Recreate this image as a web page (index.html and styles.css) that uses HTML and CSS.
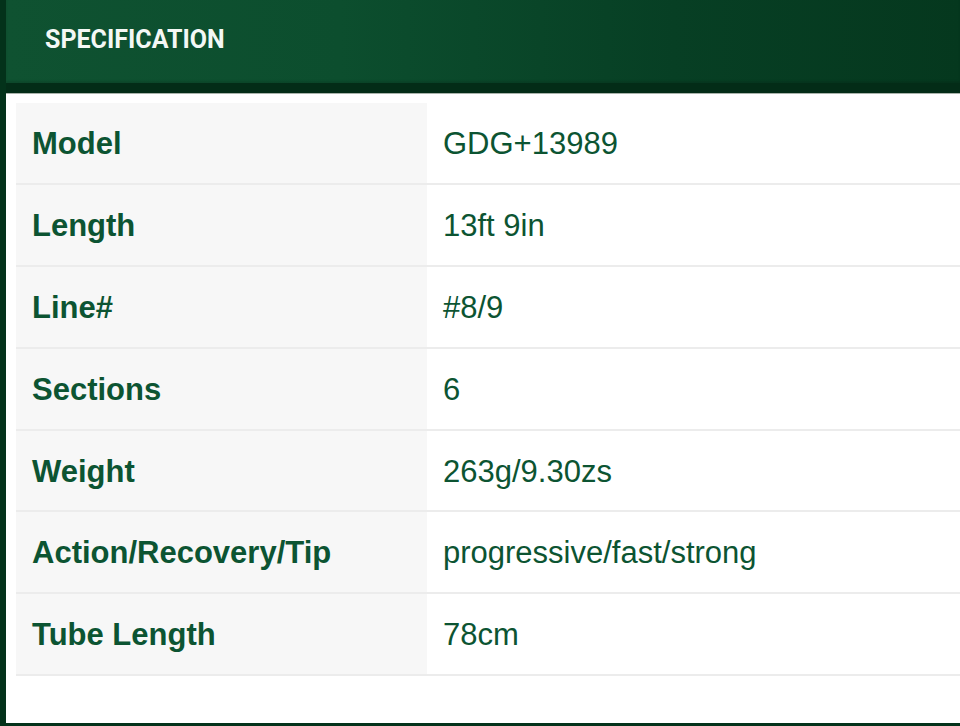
FILE: index.html
```html
<!DOCTYPE html>
<html>
<head>
<meta charset="utf-8">
<link rel="stylesheet" href="styles.css">
</head>
<body>
<div class="frame">
  <div class="header"><h2 class="title">SPECIFICATION</h2></div>
  <div class="content">
    <table class="spec">
      <tr><th>Model</th><td>GDG+13989</td></tr>
      <tr><th>Length</th><td>13ft 9in</td></tr>
      <tr><th>Line#</th><td>#8/9</td></tr>
      <tr><th>Sections</th><td>6</td></tr>
      <tr><th>Weight</th><td>263g/9.30zs</td></tr>
      <tr><th>Action/Recovery/Tip</th><td>progressive/fast/strong</td></tr>
      <tr><th>Tube Length</th><td>78cm</td></tr>
    </table>
  </div>
</div>
</body>
</html>
```
FILE: styles.css
```css
html, body { margin: 0; padding: 0; }
body { width: 960px; height: 726px; overflow: hidden; background: #03321a; font-family: "Liberation Sans", Arial, sans-serif; }
.frame { height: 723px; padding-left: 6px; display: flex; flex-direction: column; box-sizing: border-box; }
.header {
  height: 83px;
  background: linear-gradient(90deg, #0f5231 0%, #0c4e2e 35%, #073f24 70%, #05381e 100%);
  border-bottom: 10px solid #032c17;
  box-shadow: inset 0 -2px 2px rgba(0,0,0,0.12);
  display: flex; align-items: center;
  padding-left: 39px;
}
.title { margin: 0 0 4px; color: #f4f8f5; font-family: Roboto, sans-serif; font-weight: 700; font-size: 25px; }
.content { flex: 1; background: #fff; border-top: 1px solid #a9b3ab; padding: 9px 0 0 10px; }
.spec { border-collapse: collapse; width: 100%; }
.spec tr { border-bottom: 2px solid #ececec; }
.spec th, .spec td { height: 77.9px; padding: 2px 0 0 16px; text-align: left; vertical-align: middle; font-size: 31px; color: #0c5432; }
.spec th { width: 395px; background: #f7f7f7; font-weight: 700; }
.spec td { font-weight: 400; }
```
